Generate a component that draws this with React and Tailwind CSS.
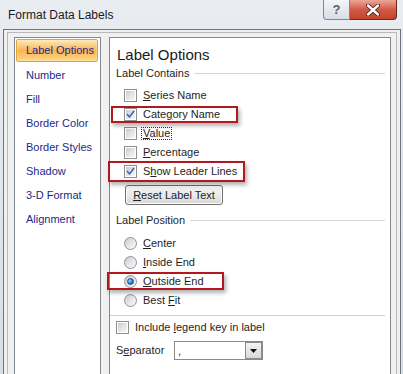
import React from "react";

const U = ({ children }) => <span className="underline underline-offset-[1px]">{children}</span>;

function Check({ checked }) {
  return (
    <div className="w-[13px] h-[13px] border border-[#8e8f8f] bg-white p-[1px] shrink-0">
      <div className="w-full h-full bg-gradient-to-br from-[#c8cbd0] via-[#e2e4e6] to-[#f7f7f7] relative">
        {checked && (
          <svg width="9" height="9" viewBox="0 0 9 9" className="absolute left-0 top-0">
            <path d="M1.4 4.5 L3.6 6.9 L7.8 1.3" fill="none" stroke="#3a5bb8" strokeWidth="1.5" strokeLinecap="round" strokeLinejoin="round" />
          </svg>
        )}
      </div>
    </div>
  );
}

function Radio({ checked }) {
  return (
    <div className="w-[13px] h-[13px] rounded-full border border-[#8e9399] bg-gradient-to-br from-[#c6cacf] via-[#e4e6e8] to-[#fafafa] flex items-center justify-center shrink-0">
      {checked && (
        <div className="w-[7px] h-[7px] rounded-full bg-[radial-gradient(circle_at_35%_35%,#a8dcff_0%,#2a85d8_50%,#0f4a8e_100%)] border border-[#1b4f86]" />
      )}
    </div>
  );
}

function Row({ children }) {
  return <div className="h-[19px] flex items-center ml-[8px]">{children}</div>;
}

export default function App() {
  const items = ["Number", "Fill", "Border Color", "Border Styles", "Shadow", "3-D Format", "Alignment"];
  return (
    <div
      className="w-[403px] h-[374px] relative overflow-hidden bg-gradient-to-b from-[#e9edf1] via-[#e1e6ec] to-[#d8dee5] text-[#1e1e1e]"
      style={{ fontFamily: '"Liberation Sans", Arial, sans-serif' }}
    >
      {/* title bar */}
      <div className="h-[29px] flex items-start justify-between">
        <div className="pl-[8px] pt-[7px] text-[12px] leading-[16px] text-[#1a1a1a]">Format Data Labels</div>
        <div className="flex mr-[6px]">
          <div className="w-[27px] h-[20px] border border-[#7d8896] border-t-0 rounded-bl-[4px] bg-gradient-to-b from-[#f3f5f8] to-[#d9dee5] flex items-center justify-center text-[13px] font-bold text-[#5a5f66]">
            ?
          </div>
          <div className="w-[47px] h-[20px] border border-[#6e2a20] border-t-0 border-l-0 rounded-br-[4px] bg-gradient-to-b from-[#eaa798] via-[#d25a44] to-[#c4422b] flex items-center justify-center">
            <svg width="14" height="12" viewBox="0 0 14 12">
              <path d="M2 1.5 L12 10.5 M12 1.5 L2 10.5" stroke="#4a2018" strokeWidth="4.2" strokeLinecap="round" />
              <path d="M2 1.5 L12 10.5 M12 1.5 L2 10.5" stroke="#ffffff" strokeWidth="2.4" strokeLinecap="round" />
            </svg>
          </div>
        </div>
      </div>

      {/* frame */}
      <div className="ml-[3px] mr-[2px] h-[345px] border-l border-r border-t border-[#6b7480] bg-[#f0f0f0] pl-[3px] pr-[3px] pt-[2px]">
        <div className="h-[400px] border border-[#b9b9b9] bg-[#f0f0f0] pl-[6px] pr-[5px] pt-[4px] flex gap-[8px]">
          {/* left panel */}
          <div className="w-[87px] h-[400px] border border-[#828790] bg-white px-[1px] pt-[1px] text-[11px] text-[#1a2a88]">
            <div className="h-[24px]">
              <div className="h-[23px] w-[82px] rounded-[2px] border border-[#e2a43a] bg-gradient-to-b from-[#fde8b4] via-[#f8b450] to-[#fcd98a] flex items-center pl-[9px] shadow-[inset_0_0_2px_#fff3d0]">
                Label Options
              </div>
            </div>
            {items.map((t) => (
              <div key={t} className="h-[24px] flex items-center pl-[10px]">
                {t}
              </div>
            ))}
          </div>

          {/* right panel */}
          <div className="w-[282px] h-[400px] border border-[#828790] bg-white pl-[6px] text-[11px]">
            <div className="mt-[8px] ml-[1px] text-[15px] leading-[18px] text-[#1a1a1a]">Label Options</div>
            <div className="mt-[2px] h-[14px] flex items-center">
              <span className="leading-[14px]">Label Contains</span>
              <div className="flex-1 h-px bg-[#d5d5d5] ml-[5px] mr-[5px]" />
            </div>
            <div className="mt-[6px]">
              <Row>
                <Check />
                <span className="ml-[6px]"><U>S</U>eries Name</span>
              </Row>
              <Row>
                <Check checked />
                <span className="ml-[6px]">Cate<U>g</U>ory Name</span>
              </Row>
              <Row>
                <Check />
                <span className="ml-[5px] px-[1px] outline outline-1 outline-dotted outline-[#333] leading-[11px]"><U>V</U>alue</span>
              </Row>
              <Row>
                <Check />
                <span className="ml-[6px]"><U>P</U>ercentage</span>
              </Row>
              <Row>
                <Check checked />
                <span className="ml-[6px]">S<U>h</U>ow Leader Lines</span>
              </Row>
            </div>
            <div className="mt-[4px] ml-[9px] w-[98px] h-[20px] rounded-[3px] border border-[#707070] bg-gradient-to-b from-[#f2f2f2] via-[#ebebeb] to-[#d6d6d6] flex items-center justify-center shadow-[inset_0_0_0_1px_#fcfcfc]">
              <span><U>R</U>eset Label Text</span>
            </div>
            <div className="mt-[8px] h-[14px] flex items-center">
              <span className="leading-[14px]">Label Position</span>
              <div className="flex-1 h-px bg-[#d5d5d5] ml-[5px] mr-[5px]" />
            </div>
            <div className="mt-[7px]">
              <Row>
                <Radio />
                <span className="ml-[6px]"><U>C</U>enter</span>
              </Row>
              <Row>
                <Radio />
                <span className="ml-[6px]"><U>I</U>nside End</span>
              </Row>
              <Row>
                <Radio checked />
                <span className="ml-[6px]"><U>O</U>utside End</span>
              </Row>
              <Row>
                <Radio />
                <span className="ml-[6px]">Best <U>F</U>it</span>
              </Row>
            </div>
            <div className="mt-[5px] -ml-[6px] mr-[5px] h-px bg-[#cfcfcf]" />
            <div className="mt-[2px] h-[19px] flex items-center">
              <Check />
              <span className="ml-[6px]">Include <U>l</U>egend key in label</span>
            </div>
            <div className="mt-[4px] h-[19px] flex items-center">
              <span className="w-[58px]">S<U>e</U>parator</span>
              <div className="w-[89px] h-[19px] border border-[#8a8a8a] bg-white flex items-center">
                <span className="pl-[3px] flex-1 leading-[12px]">,</span>
                <div className="w-[17px] h-[17px] border border-[#8c8c8c] bg-gradient-to-b from-[#f4f4f4] to-[#d8d8d8] flex items-center justify-center">
                  <svg width="7" height="4" viewBox="0 0 7 4"><path d="M0 0 H7 L3.5 4 Z" fill="#111" /></svg>
                </div>
              </div>
            </div>
          </div>
        </div>
      </div>

      {/* annotation boxes */}
      <div className="absolute left-[111px] top-[106px] w-[127px] h-[17px] border-2 border-[#b3181f] shadow-[2px_3px_4px_rgba(0,0,0,0.3)]" />
      <div className="absolute left-[108px] top-[161px] w-[137px] h-[21px] border-2 border-[#b3181f] shadow-[2px_3px_4px_rgba(0,0,0,0.3)]" />
      <div className="absolute left-[107px] top-[272px] w-[117px] h-[18px] border-2 border-[#b3181f] shadow-[2px_3px_4px_rgba(0,0,0,0.3)]" />
    </div>
  );
}
